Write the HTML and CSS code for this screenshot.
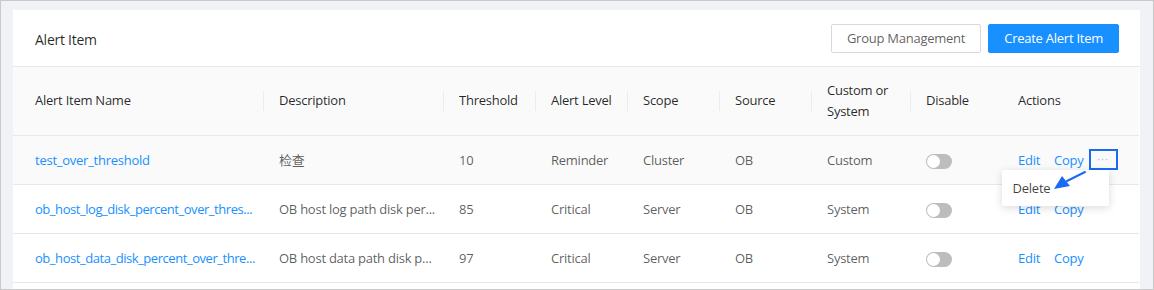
FILE: index.html
```html
<!DOCTYPE html>
<html lang="en">
<head>
    <meta charset="UTF-8">
    <meta name="viewport" content="width=device-width, initial-scale=1.0">
    <title>Alert Item</title>
    <link rel="stylesheet" href="styles.css">
</head>
<body>
    <div class="frame">
        <div class="card">
            <div class="card-head">
                <div class="card-title">Alert Item</div>
                <div class="head-actions">
                    <a class="btn">Group Management</a>
                    <a class="btn btn-primary">Create Alert Item</a>
                </div>
            </div>

            <table class="alert-table">
                <colgroup>
                    <col style="width: 251px">
                    <col style="width: 180px">
                    <col style="width: 92px">
                    <col style="width: 92px">
                    <col style="width: 92px">
                    <col style="width: 92px">
                    <col style="width: 99px">
                    <col style="width: 92px">
                    <col style="width: 136px">
                </colgroup>
                <thead>
                    <tr>
                        <th class="first">Alert Item Name</th>
                        <th class="sep">Description</th>
                        <th class="sep">Threshold</th>
                        <th class="sep">Alert Level</th>
                        <th class="sep">Scope</th>
                        <th class="sep">Source</th>
                        <th class="sep">Custom or<br>System</th>
                        <th class="sep">Disable</th>
                        <th>Actions</th>
                    </tr>
                </thead>
                <tbody>
                    <tr class="hover">
                        <td class="first"><a class="link">test_over_threshold</a></td>
                        <td class="cjk">检查</td>
                        <td>10</td>
                        <td>Reminder</td>
                        <td>Cluster</td>
                        <td>OB</td>
                        <td>Custom</td>
                        <td><span class="switch"></span></td>
                        <td>
                            <div class="actions">
                                <a class="link">Edit</a>
                                <a class="link">Copy</a>
                                <span class="more">···
                                    <div class="menu">Delete</div>
                                    <svg class="pointer" width="40" height="24" viewBox="0 0 40 24">
                                        <line x1="34" y1="2" x2="16" y2="11" stroke="#1d6af2" stroke-width="2" stroke-linecap="round"/>
                                        <polygon points="3,19 11,6 19,16" fill="#1d6af2"/>
                                    </svg>
                                </span>
                            </div>
                        </td>
                    </tr>
                    <tr>
                        <td class="first"><a class="link name" title="ob_host_log_disk_percent_over_threshold">ob_host_log_disk_percent_over_thres...</a></td>
                        <td title="OB host log path disk percent over threshold">OB host log path disk per...</td>
                        <td>85</td>
                        <td>Critical</td>
                        <td>Server</td>
                        <td>OB</td>
                        <td>System</td>
                        <td><span class="switch"></span></td>
                        <td>
                            <div class="actions">
                                <a class="link">Edit</a>
                                <a class="link">Copy</a>
                            </div>
                        </td>
                    </tr>
                    <tr>
                        <td class="first"><a class="link name" title="ob_host_data_disk_percent_over_threshold">ob_host_data_disk_percent_over_thre...</a></td>
                        <td title="OB host data path disk percent over threshold">OB host data path disk p...</td>
                        <td>97</td>
                        <td>Critical</td>
                        <td>Server</td>
                        <td>OB</td>
                        <td>System</td>
                        <td><span class="switch"></span></td>
                        <td>
                            <div class="actions">
                                <a class="link">Edit</a>
                                <a class="link">Copy</a>
                            </div>
                        </td>
                    </tr>
                </tbody>
            </table>
        </div>
    </div>
</body>
</html>
```

FILE: styles.css
```css
* {
    box-sizing: border-box;
}

body {
    margin: 0;
    font-family: 'Open Sans', 'Noto Sans CJK SC', sans-serif;
    font-size: 13px;
    letter-spacing: -0.25px;
    color: rgba(0, 0, 0, 0.65);
}

.frame {
    width: 1154px;
    height: 290px;
    border: 1px solid #c9c9c9;
    background-color: #f0f2f5;
    padding: 9px 13px 0 12px;
    overflow: hidden;
}

.card {
    background-color: #fff;
    height: 279px;
}

.card-head {
    display: flex;
    align-items: center;
    justify-content: space-between;
    height: 57px;
    padding: 0 21px 0 22px;
    border-bottom: 1px solid #e8e8e8;
}

.card-title {
    font-size: 14px;
    color: rgba(0, 0, 0, 0.85);
    padding-top: 3px;
}

.head-actions {
    display: flex;
    gap: 7px;
}

.btn {
    display: flex;
    align-items: center;
    justify-content: center;
    height: 29px;
    padding: 0 15px;
    border: 1px solid #d9d9d9;
    border-radius: 2px;
    color: rgba(0, 0, 0, 0.65);
    background-color: #fff;
}

.btn-primary {
    background-color: #1890ff;
    border-color: #1890ff;
    color: #fff;
}

.alert-table {
    width: 1126px;
    table-layout: fixed;
    border-collapse: collapse;
}

.alert-table th {
    height: 68px;
    background-color: #fafafa;
    font-weight: 400;
    text-align: left;
    color: rgba(0, 0, 0, 0.85);
    padding: 0 15px;
    line-height: 21px;
    white-space: nowrap;
    border-bottom: 1px solid #e8e8e8;
    position: relative;
}

.alert-table th.sep::before {
    content: "";
    position: absolute;
    left: -1px;
    top: 24px;
    width: 1px;
    height: 20px;
    background-color: #ececec;
}

.alert-table td {
    height: 49px;
    padding: 0 15px;
    border-bottom: 1px solid #e8e8e8;
    white-space: nowrap;
}

.alert-table .first {
    padding-left: 22px;
    padding-right: 0;
}

.alert-table .name {
    letter-spacing: -0.45px;
}

.alert-table tr.hover td {
    background-color: #fafafa;
}

.cjk {
    font-family: 'Noto Sans CJK SC', sans-serif;
}

.link {
    color: #1890ff;
}

.switch {
    display: inline-block;
    position: relative;
    width: 26px;
    height: 15px;
    border-radius: 8px;
    background-color: #bdbdbd;
    vertical-align: middle;
}

.switch::after {
    content: "";
    position: absolute;
    left: 1px;
    top: 1px;
    width: 13px;
    height: 13px;
    border-radius: 50%;
    background-color: #fff;
}

.actions {
    display: flex;
    align-items: center;
    gap: 14px;
}

.more {
    position: relative;
    width: 29px;
    height: 21px;
    margin-left: -9px;
    border: 2px solid #1d6af2;
    color: #a9bcd8;
    font-size: 11px;
    line-height: 15px;
    text-align: center;
    letter-spacing: 1px;
}

.menu {
    position: absolute;
    right: 7px;
    top: 19px;
    width: 107px;
    height: 36px;
    padding: 8px 11px;
    background-color: #fff;
    box-shadow: 0 2px 8px rgba(0, 0, 0, 0.15);
    border-radius: 2px;
    color: rgba(0, 0, 0, 0.75);
    font-size: 13px;
    line-height: 20px;
    letter-spacing: -0.25px;
    text-align: left;
    z-index: 2;
}

.pointer {
    position: absolute;
    left: -40px;
    top: 19px;
    z-index: 3;
}
```
